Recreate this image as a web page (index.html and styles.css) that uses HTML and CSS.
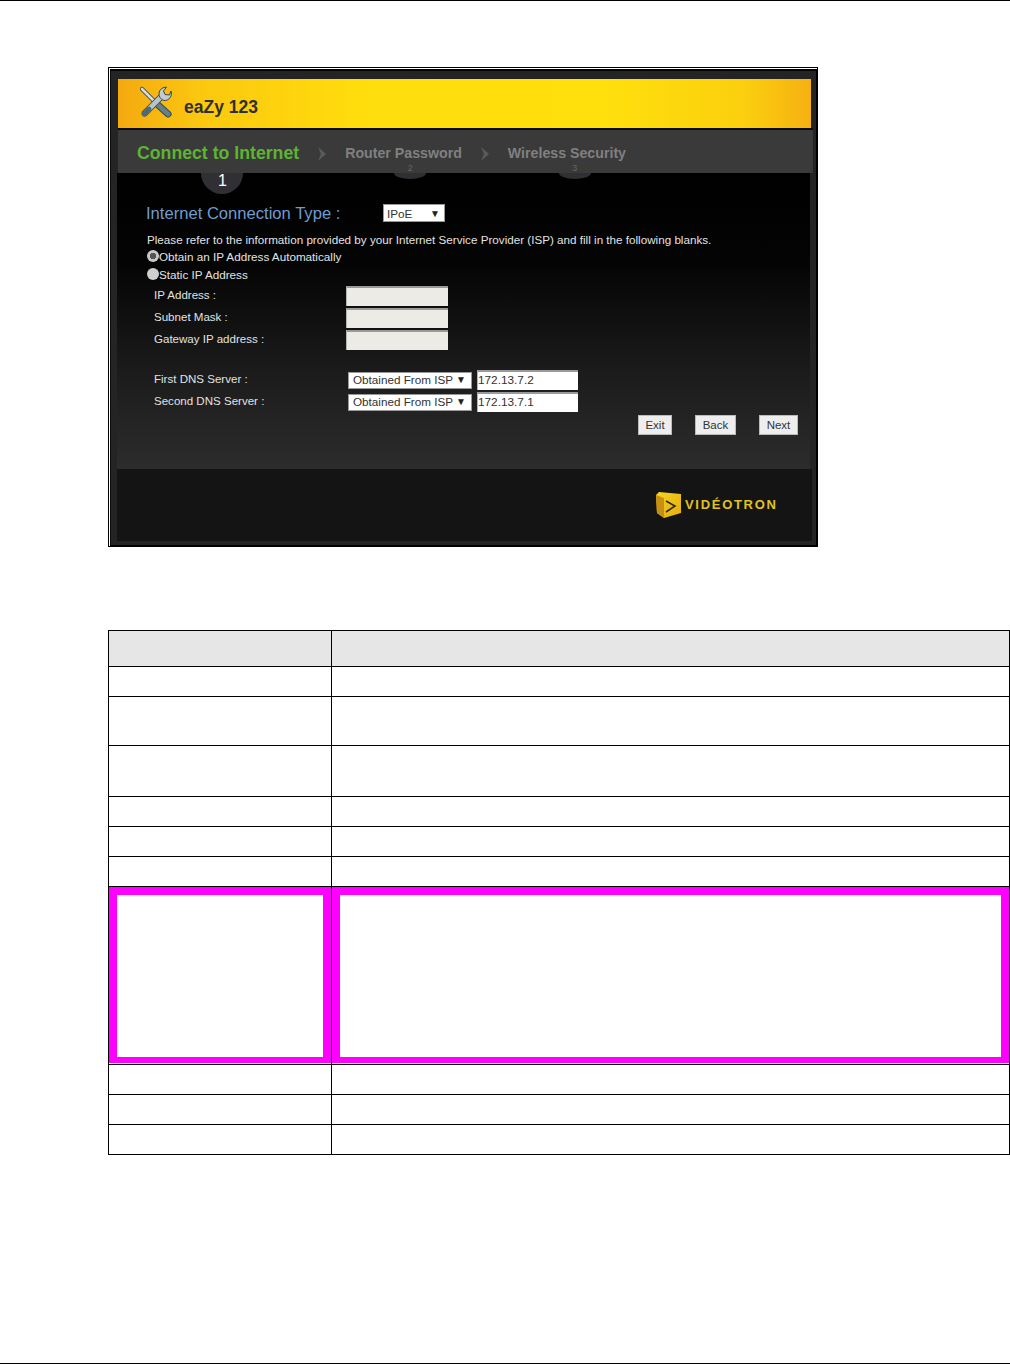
FILE: index.html
```html
<!DOCTYPE html>
<html lang="en">
<head>
<meta charset="utf-8">
<title>eaZy 123 - Connect to Internet</title>
<link rel="stylesheet" href="styles.css">
</head>
<body>
<div class="rule-top"></div>
<main class="page">
  <figure class="shot">
    <div class="shot-inner">
      <header class="banner">
        <svg class="tools" viewBox="0 0 32 32" width="32" height="32" aria-hidden="true">
          <path d="M2 3 L16 17" stroke="#3b4548" stroke-width="4.4" stroke-linecap="round" fill="none"/>
          <path d="M2 3 L16 17" stroke="#d3dcdf" stroke-width="2.6" stroke-linecap="round" fill="none"/>
          <path d="M17 18 L28 28" stroke="#37474c" stroke-width="7" stroke-linecap="round" fill="none"/>
          <path d="M17 18 L28 28" stroke="#64818a" stroke-width="5" stroke-linecap="round" fill="none"/>
          <path d="M5 27 L21 11" stroke="#3b4548" stroke-width="6.6" stroke-linecap="round" fill="none"/>
          <path d="M5 27 L21 11" stroke="#b4c4c9" stroke-width="4.8" stroke-linecap="round" fill="none"/>
          <path d="M4 28 L9 23" stroke="#4c6a73" stroke-width="4.8" stroke-linecap="round" fill="none"/>
          <path d="M26.5 1.2 L23.5 5 L25 8.5 L29.5 9 L31 5 A7 7 0 0 1 24 14.5 A7 7 0 0 1 19 7 A7 7 0 0 1 26.5 1.2 Z" fill="#c0ced2" stroke="#3b4548" stroke-width="1"/>
        </svg>
        <span class="brand">eaZy 123</span>
      </header>
      <nav class="steps">
        <div class="step step-on">Connect to Internet<span class="knob knob-big">1</span></div>
        <svg class="chev" viewBox="0 0 10 16" width="10" height="16" aria-hidden="true"><path d="M1 1 L9 8 L1 15 L4 8 Z" fill="#5a5a5a"/></svg>
        <div class="step step-two">Router Password<span class="knob knob-small">2</span></div>
        <svg class="chev chev-two" viewBox="0 0 10 16" width="10" height="16" aria-hidden="true"><path d="M1 1 L9 8 L1 15 L4 8 Z" fill="#5a5a5a"/></svg>
        <div class="step step-three">Wireless Security<span class="knob knob-small">3</span></div>
      </nav>
      <section class="form">
        <div class="type-row">
          <h2 class="type-label">Internet Connection Type :</h2>
          <div class="sel sel-type"><span>IPoE</span><i class="arrow">▼</i></div>
        </div>
        <p class="intro">Please refer to the information provided by your Internet Service Provider (ISP) and fill in the following blanks.</p>
        <div class="radio-row"><span class="radio radio-on"></span>Obtain an IP Address Automatically</div>
        <div class="radio-row"><span class="radio"></span>Static IP Address</div>
        <div class="ip-rows">
          <div class="ip-row"><label class="lbl">IP Address :</label><div class="field"></div></div>
          <div class="ip-row"><label class="lbl">Subnet Mask :</label><div class="field"></div></div>
          <div class="ip-row"><label class="lbl">Gateway IP address :</label><div class="field"></div></div>
        </div>
        <div class="dns-rows">
          <div class="dns-row"><label class="lbl">First DNS Server :</label><div class="sel sel-dns"><span>Obtained From ISP</span><i class="arrow">▼</i></div><div class="text-in">172.13.7.2</div></div>
          <div class="dns-row"><label class="lbl">Second DNS Server :</label><div class="sel sel-dns"><span>Obtained From ISP</span><i class="arrow">▼</i></div><div class="text-in">172.13.7.1</div></div>
        </div>
        <div class="actions">
          <button class="btn btn-exit" type="button">Exit</button>
          <button class="btn btn-back" type="button">Back</button>
          <button class="btn btn-next" type="button">Next</button>
        </div>
      </section>
      <footer class="foot">
        <svg class="cube" viewBox="0 0 25 26" width="25" height="26" aria-hidden="true">
          <defs><linearGradient id="cubeFace" x1="0" y1="0" x2="1" y2="1"><stop offset="0" stop-color="#f7d41e"/><stop offset="1" stop-color="#e3ad12"/></linearGradient></defs>
          <path d="M0 3 L3 0 L25 2 L25 21 L8 26 L1 21 Z" fill="url(#cubeFace)"/>
          <path d="M0 3 L8 6 L8 26 L1 21 Z" fill="#c98f10"/>
          <path d="M10 9 L19 14 L10 20" fill="none" stroke="#2e2806" stroke-width="1.6"/>
        </svg>
        <span class="wordmark">VIDÉOTRON</span>
      </footer>
    </div>
  </figure>

  <table class="grid">
    <colgroup><col class="col-a"><col class="col-b"></colgroup>
    <tbody>
      <tr class="h36 head"><td></td><td></td></tr>
      <tr class="h30"><td></td><td></td></tr>
      <tr class="h49"><td></td><td></td></tr>
      <tr class="h51"><td></td><td></td></tr>
      <tr class="h30"><td></td><td></td></tr>
      <tr class="h30"><td></td><td></td></tr>
      <tr class="h30"><td></td><td></td></tr>
      <tr class="h178 hot"><td><div class="hot-box"></div></td><td><div class="hot-box"></div></td></tr>
      <tr class="h30"><td></td><td></td></tr>
      <tr class="h30"><td></td><td></td></tr>
      <tr class="h30"><td></td><td></td></tr>
    </tbody>
  </table>
</main>
<div class="rule-bottom"></div>
</body>
</html>
```
FILE: styles.css
```css
* { box-sizing: border-box; }
html, body { margin: 0; padding: 0; background: #fff; }
body { width: 1010px; height: 1364px; position: relative; overflow: hidden; font-family: "Liberation Sans", Arial, sans-serif; }

.rule-top { height: 1px; background: #000; }
.rule-bottom { position: absolute; left: 0; right: 0; bottom: 0; height: 1px; background: #000; }

.page { padding: 66px 0 0 108px; }

/* screenshot frame */
.shot { margin: 0; width: 710px; height: 480px; border: 1px solid #000; padding: 1px 0 0 1px; background: #fff; }
.shot-inner { width: 707px; height: 477px; background: #242424; border-top: 2px solid #050505; border-right: 1px solid #000; border-bottom: 1px solid #000; border-left: 1px solid #0b0b0b; padding: 8px 0 4px 6px; display: flex; flex-direction: column; }

.banner { width: 693px; height: 49px; flex: none; margin-left: 1px; background: linear-gradient(90deg, #f4a90f 0%, #fbc80f 12%, #ffdd0c 35%, #ffdf0c 70%, #fbd00e 90%, #f6b012 100%); display: flex; align-items: center; padding-left: 22px; }
.tools { flex: none; margin-top: -3px; }
.brand { margin-left: 12px; margin-top: 8px; font-size: 17.5px; font-weight: 700; color: #2f2f2f; }

.steps { width: 695px; height: 45px; flex: none; margin-left: 1px; border-top: 2px solid #0c0c0c; background: #3a3a3a; display: flex; align-items: center; padding: 3px 0 0 19px; font-weight: 700; position: relative; z-index: 1; }
.step { position: relative; white-space: nowrap; }
.step-on { font-size: 17.7px; color: #5cb531; }
.step-two, .step-three { font-size: 14.2px; color: #808080; margin-left: 18px; }
.chev { flex: none; margin: 2px 0 0 18px; }
.knob { position: absolute; display: flex; justify-content: center; font-weight: 400; z-index: -1; }
.knob-big { left: 64px; top: 30px; width: 42px; height: 21px; border-radius: 0 0 21px 21px; background: #303034; color: #fff; font-size: 16px; line-height: 16px; padding-left: 1px; }
.knob-small { left: 47px; top: 17px; width: 36px; height: 12px; color: #666; font-size: 9px; line-height: 12px; }
.knob-small::after { content: ""; position: absolute; left: 2px; top: 11px; width: 32px; height: 6px; background: #303034; border-radius: 0 0 16px 16px / 0 0 6px 6px; }
.step-three .knob-small { left: 49px; }

/* form body */
.form { width: 693px; height: 296px; flex: none; background: linear-gradient(180deg, #000 0%, #040404 30%, #1a1a1a 65%, #2c2c2c 100%); padding: 31px 0 0 29px; color: #e2e2e2; font-size: 11.7px; }
.type-row { display: flex; align-items: center; height: 18px; }
.type-label { margin: 2px 0 0; width: 237px; font-size: 16.6px; font-weight: 400; color: #6f9ccf; white-space: nowrap; }
.sel { background: #fff; color: #333; border: 1px solid #999; display: flex; align-items: center; justify-content: space-between; font-size: 11.7px; }
.sel-type { width: 62px; height: 18px; padding: 1px 4px 0 3px; }
.arrow { font-style: normal; font-size: 10px; color: #222; }
.intro { margin: 10px 0 0 1px; height: 16px; line-height: 16px; font-size: 11.67px; white-space: nowrap; }
.radio-row { display: flex; align-items: center; height: 18px; margin-left: 1px; padding-bottom: 2px; }
.radio { width: 12px; height: 12px; border-radius: 50%; background: #cfcfcf; flex: none; }
.radio-on { background: radial-gradient(circle, #555 0 3px, #c8c8c8 3.5px); }
.ip-rows { margin: 1px 0 0 8px; }
.ip-row { display: flex; align-items: center; height: 22px; }
.lbl { width: 192px; flex: none; white-space: nowrap; margin-top: -3px; font-size: 11.55px; }
.field { width: 102px; height: 20px; background: #ecebe6; border-top: 2px solid #9a9a9a; border-left: 1px solid #b5b5b0; }
.dns-rows { margin: 18px 0 0 8px; }
.dns-row { display: flex; align-items: center; height: 22px; }
.dns-row .lbl { width: 194px; }
.sel-dns { width: 124px; height: 17px; padding: 0 5px 2px 4px; }
.text-in { width: 101px; height: 20px; margin-left: 5px; background: #fff; color: #333; border-top: 2px solid #9a9a9a; border-left: 1px solid #b5b5b0; line-height: 16px; font-size: 11.8px; }
.actions { display: flex; margin: 2px 0 0 492px; }
.btn { height: 20px; background: #eee; color: #333; border: 1px solid #bbb; font: 11.5px "Liberation Sans", Arial, sans-serif; padding: 0; }
.btn-exit { width: 34px; }
.btn-back { width: 41px; margin-left: 23px; }
.btn-next { width: 39px; margin-left: 23px; }

.foot { width: 695px; flex: 1; background: #141414; display: flex; align-items: center; padding: 0 0 0 539px; }
.cube { flex: none; }
.wordmark { margin: -2px 0 0 4px; font-size: 13px; font-weight: 700; letter-spacing: 1.7px; color: #e2c31c; }

/* table */
.grid { margin-top: 83px; width: 902px; table-layout: fixed; border-collapse: separate; border-spacing: 0; border-top: 1px solid #000; border-left: 1px solid #000; }
.col-a { width: 223px; }
.col-b { width: 678px; }
.grid td { padding: 0; border-right: 1px solid #000; border-bottom: 1px solid #000; }
.head td { background: #e6e6e6; }
.h36 { height: 36px; }
.h30 { height: 30px; }
.h49 { height: 49px; }
.h51 { height: 51px; }
.h178 { height: 178px; }
.hot td { vertical-align: top; background: #fff; }
.hot-box { height: 176px; border: solid #f0f; border-width: 8px 8px 6px; }
```
